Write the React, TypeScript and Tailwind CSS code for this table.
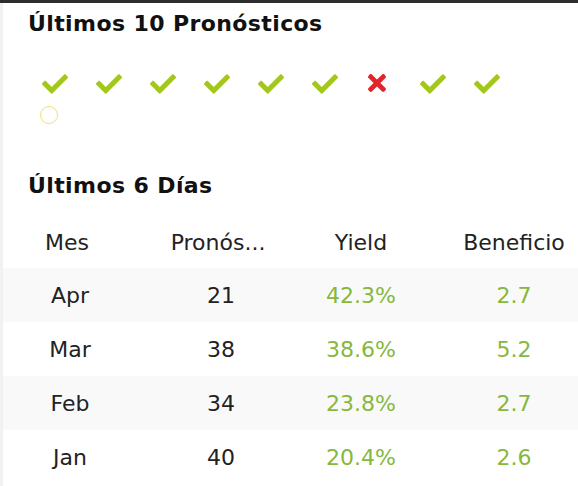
import React from 'react';
import { FaCheck, FaTimes } from 'react-icons/fa';

type Pick = 'win' | 'loss' | 'pending';

const picks: Pick[] = ['win', 'win', 'win', 'win', 'win', 'win', 'loss', 'win', 'win', 'pending'];

const rows = [
  { mes: 'Apr', count: 21, yieldPct: '42.3%', profit: '2.7' },
  { mes: 'Mar', count: 38, yieldPct: '38.6%', profit: '5.2' },
  { mes: 'Feb', count: 34, yieldPct: '23.8%', profit: '2.7' },
  { mes: 'Jan', count: 40, yieldPct: '20.4%', profit: '2.6' },
];

const PickIcon: React.FC<{ pick: Pick }> = ({ pick }) => {
  if (pick === 'win') return <FaCheck className="text-[#a3c71c]" size={26} />;
  if (pick === 'loss') return <FaTimes className="text-[#e0262b] -ml-[2px] mt-[-1px]" size={26} />;
  return <span className="block w-[18px] h-[18px] mt-[3px] rounded-full border-[1.5px] border-[#efe27a] -ml-[2px]" />;
};

export default function App() {
  return (
    <div className="w-[578px] h-[486px] overflow-hidden bg-white border-t-[3px] border-[#2d2d2d] flex font-['DejaVu_Sans',sans-serif]">
      <div className="w-[3px] bg-[#f1f1f1] shrink-0" />
      <div className="flex-1 border-r border-[#ebebeb] flex flex-col">
        <h2 className="pl-[25px] pt-[8px] text-[22px] font-bold text-[#111] leading-[26px] tracking-[0.4px]">
          Últimos 10 Pronósticos
        </h2>

        <div className="pl-[39px] pt-[34px] w-[540px] flex flex-wrap">
          {picks.map((p, i) => (
            <div key={i} className="w-[54px] h-[32px] flex items-start">
              <PickIcon pick={p} />
            </div>
          ))}
        </div>

        <h3 className="pl-[25px] pt-[38px] text-[22px] font-bold text-[#111] leading-[26px] tracking-[0.4px]">
          Últimos 6 Días
        </h3>

        <div className="mt-[17px] text-[22px] text-[#222]">
          <div className="flex h-[52px] items-center">
            <div className="w-[128px] text-center">Mes</div>
            <div className="w-[174px] text-center whitespace-nowrap">Pronós...</div>
            <div className="w-[112px] text-center">Yield</div>
            <div className="w-[194px] text-center whitespace-nowrap">Beneficio</div>
          </div>
          {rows.map((r, i) => (
            <div
              key={r.mes}
              className={`flex h-[54px] items-center ${i % 2 === 0 ? 'bg-[#f9f9f9]' : 'bg-white'}`}
            >
              <div className="w-[134px] text-center">{r.mes}</div>
              <div className="w-[168px] text-center">{r.count}</div>
              <div className="w-[112px] text-center text-[#86b83e]">{r.yieldPct}</div>
              <div className="w-[194px] text-center text-[#86b83e]">{r.profit}</div>
            </div>
          ))}
        </div>
      </div>
    </div>
  );
}
